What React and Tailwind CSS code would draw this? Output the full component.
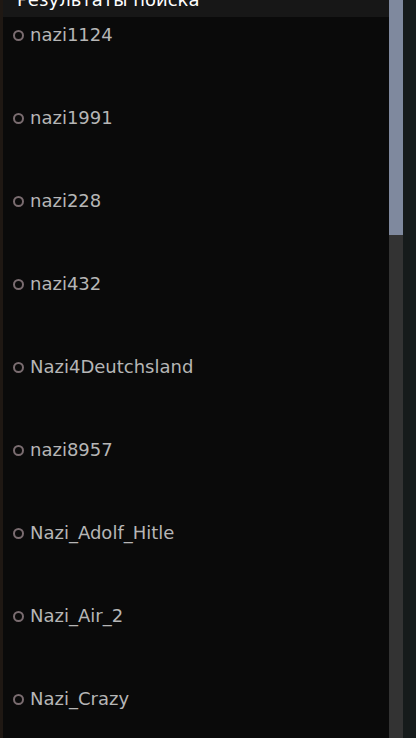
export default function App() {
  const items = [
    "nazi1124",
    "nazi1991",
    "nazi228",
    "nazi432",
    "Nazi4Deutchsland",
    "nazi8957",
    "Nazi_Adolf_Hitle",
    "Nazi_Air_2",
    "Nazi_Crazy",
  ];
  return (
    <div className="flex h-[738px] w-[416px] overflow-hidden bg-[#161b1b] font-['DejaVu_Sans',sans-serif]">
      <div className="w-[3px] shrink-0 bg-[#1f1813]" />
      <div className="flex w-[386px] shrink-0 flex-col bg-[#0a0a0a]">
        <div className="h-[17px] shrink-0 overflow-hidden bg-[#171717] pl-[14px]">
          <div className="-mt-[12px] text-[18px] leading-[24px] text-white">Результаты поиска</div>
        </div>
        <div className="flex flex-col">
          {items.map((name) => (
            <div key={name} className="flex h-[83px] items-start pl-[10px] pt-[6px]">
              <div className="flex h-[24px] items-center">
                <span className="h-[11px] w-[11px] rounded-full border-2 border-[#7a6c70]" />
                <span className="ml-[6px] text-[18px] leading-[24px] text-[#b6b6b6]">{name}</span>
              </div>
            </div>
          ))}
        </div>
      </div>
      <div className="flex w-[14px] shrink-0 flex-col bg-[#333333]">
        <div className="h-[235px] bg-[#7f899e]" />
      </div>
    </div>
  );
}
